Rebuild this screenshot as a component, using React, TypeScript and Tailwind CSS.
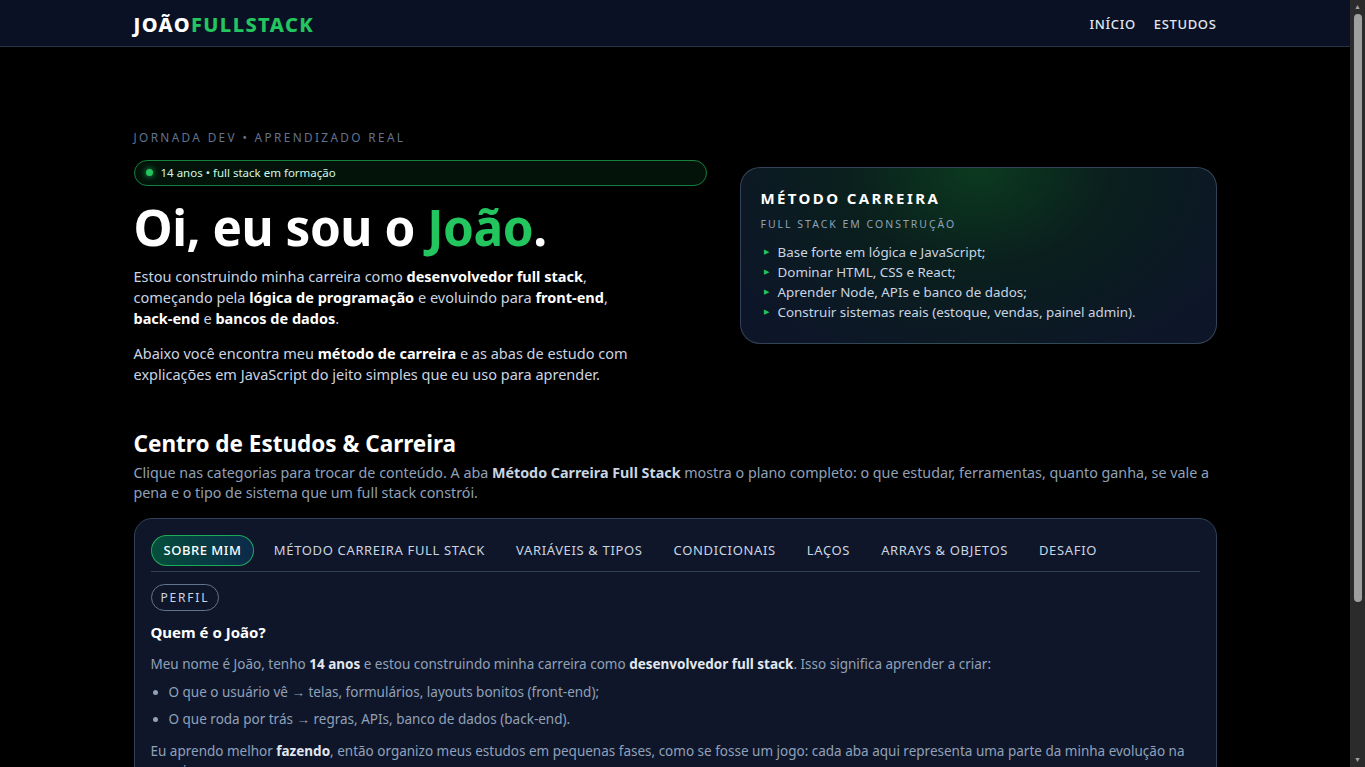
import React from 'react'

const tabs = [
  'Sobre mim',
  'Método Carreira Full Stack',
  'Variáveis & Tipos',
  'Condicionais',
  'Laços',
  'Arrays & Objetos',
  'Desafio',
]

const metodo = [
  'Base forte em lógica e JavaScript;',
  'Dominar HTML, CSS e React;',
  'Aprender Node, APIs e banco de dados;',
  'Construir sistemas reais (estoque, vendas, painel admin).',
]

// barra de rolagem desenhada (a página da referência mostra a do navegador)
function FakeScrollbar() {
  return (
    <div className="fixed right-0 top-0 flex h-screen w-[15px] flex-col items-center bg-[#2b2b2b] py-[2px]">
      <span className="text-[7px] leading-[10px] text-[#a3a3a3]">▲</span>
      <div className="mt-[2px] h-[588px] w-[8px] rounded-full bg-[#9f9f9f]" />
      <div className="flex-1" />
      <span className="text-[7px] leading-[10px] text-[#a3a3a3]">▼</span>
    </div>
  )
}

export default function App() {
  return (
    <div className="min-h-screen bg-black pr-[15px] text-slate-300 font-['Noto_Sans',sans-serif]">
      <header className="border-b border-slate-700/70 bg-[#0b1124]">
        <div className="mx-auto flex h-[46px] w-[1083px] items-center justify-between pt-[3px]">
          <a className="text-[20px] font-extrabold tracking-[0.07em] text-white">
            JOÃO<span className="text-[#22c55e]">FULLSTACK</span>
          </a>
          <nav className="flex gap-[18px] text-[13px] font-medium tracking-[0.05em] text-slate-200">
            <a>INÍCIO</a>
            <a>ESTUDOS</a>
          </nav>
        </div>
      </header>

      <main className="mx-auto w-[1083px] pt-[82px]">
        <section className="grid grid-cols-[573px_1fr] gap-[33px]">
          <div>
            <p className="text-[11.8px] tracking-[0.2em] text-slate-500">JORNADA DEV • APRENDIZADO REAL</p>
            <div className="mt-[13px] flex h-[26px] items-center gap-[8px] rounded-full border border-[#15803d] bg-[#03130a] px-[11px] text-[11.5px] text-[#d1fae5]">
              <span className="h-[7px] w-[7px] rounded-full bg-[#22c55e] shadow-[0_0_6px_#22c55e]" />
              14 anos • full stack em formação
            </div>
            <h1 className="mt-[13px] text-[49.5px] font-bold leading-[1.15] tracking-[-0.01em] text-white">
              Oi, eu sou o <span className="text-[#22c55e]">João</span>.
            </h1>
            <p className="mt-[10px] max-w-[505px] text-[14.5px] leading-[21px]">
              Estou construindo minha carreira como <b className="text-white">desenvolvedor full stack</b>,
              começando pela <b className="text-white">lógica de programação</b> e evoluindo para{' '}
              <b className="text-white">front-end</b>, <b className="text-white">back-end</b> e{' '}
              <b className="text-white">bancos de dados</b>.
            </p>
            <p className="mt-[14px] max-w-[505px] text-[14.5px] leading-[21px]">
              Abaixo você encontra meu <b className="text-white">método de carreira</b> e as abas de estudo com
              explicações em JavaScript do jeito simples que eu uso para aprender.
            </p>
          </div>

          <div className="pt-[38px]">
            <div className="rounded-[20px] border border-slate-600/70 bg-[radial-gradient(ellipse_at_50%_0%,#0b3a1f_0%,#0a1f1d_40%,#0d1628_85%)] px-[20px] pb-[21px] pt-[19px]">
              <h2 className="text-[15px] font-bold tracking-[0.16em] text-white">MÉTODO CARREIRA</h2>
              <p className="mt-[7px] text-[10.5px] tracking-[0.19em] text-slate-400">FULL STACK EM CONSTRUÇÃO</p>
              <ul className="mt-[10px] text-[13.4px] leading-[20px] text-slate-300">
                {metodo.map((m) => (
                  <li key={m} className="flex items-center gap-[9px]">
                    <span className="ml-[3px] text-[7px] text-[#22c55e]">▶</span>
                    {m}
                  </li>
                ))}
              </ul>
            </div>
          </div>
        </section>

        <section className="mt-[42px]">
          <h2 className="text-[22.5px] font-bold text-white">Centro de Estudos &amp; Carreira</h2>
          <p className="mt-[3px] text-[14.3px] leading-[20px] text-slate-400">
            Clique nas categorias para trocar de conteúdo. A aba{' '}
            <b className="text-slate-300">Método Carreira Full Stack</b> mostra o plano completo: o que estudar,
            ferramentas, quanto ganha, se vale a pena e o tipo de sistema que um full stack constrói.
          </p>

          <div className="mt-[15px] rounded-[18px] border border-slate-700 bg-[#0f1629] px-[16px] pb-[40px] pt-[16px]">
            <div className="flex items-center border-b border-slate-700 pb-[5px]">
              {tabs.map((t, i) => (
                <button
                  key={t}
                  className={
                    i === 0
                      ? 'mr-[4px] h-[31px] rounded-full border border-[#22c55e]/80 bg-gradient-to-r from-[#064e3b] to-[#0c2a4a] px-[12px] text-[13px] font-medium tracking-[0.04em] text-white'
                      : 'h-[31px] px-[15.5px] text-[13px] tracking-[0.05em] text-slate-300'
                  }
                >
                  {t.toUpperCase()}
                </button>
              ))}
            </div>

            <span className="mt-[12px] inline-flex h-[27px] items-center rounded-full border border-slate-500 px-[9px] text-[12px] tracking-[0.15em] text-slate-300">
              PERFIL
            </span>

            <h3 className="mt-[10px] text-[15px] font-bold text-white">Quem é o João?</h3>
            <p className="mt-[10px] text-[13.5px] leading-[20px] text-slate-400">
              Meu nome é João, tenho <b className="text-slate-200">14 anos</b> e estou construindo minha carreira como{' '}
              <b className="text-slate-200">desenvolvedor full stack</b>. Isso significa aprender a criar:
            </p>
            <ul className="mt-[8px] list-disc space-y-[7px] pl-[18px] text-[13.5px] leading-[20px] text-slate-400">
              <li>O que o usuário vê → telas, formulários, layouts bonitos (front-end);</li>
              <li>O que roda por trás → regras, APIs, banco de dados (back-end).</li>
            </ul>
            <p className="mt-[12px] text-[13.5px] leading-[20px] text-slate-400">
              Eu aprendo melhor <b className="text-slate-200">fazendo</b>, então organizo meus estudos em pequenas fases,
              como se fosse um jogo: cada aba aqui representa uma parte da minha evolução na carreira.
            </p>
          </div>
        </section>
        <div className="h-[60px]" />
      </main>
      <FakeScrollbar />
    </div>
  )
}
